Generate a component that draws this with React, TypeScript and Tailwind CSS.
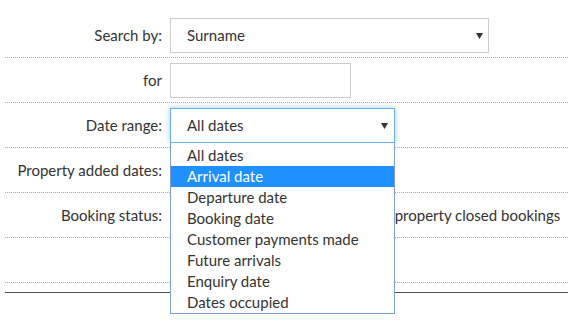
import React from "react";

const DATE_OPTIONS = [
  "All dates",
  "Arrival date",
  "Departure date",
  "Booking date",
  "Customer payments made",
  "Future arrivals",
  "Enquiry date",
  "Dates occupied",
];

function Caret() {
  return (
    <svg width="7" height="6" viewBox="0 0 7 6" className="shrink-0">
      <path d="M0 0h7L3.5 6z" fill="#333" />
    </svg>
  );
}

function Row({ label, children }: { label: string; children?: React.ReactNode }) {
  return (
    <div className="flex items-center border-b border-dotted border-[#aaa] pt-[5px] pb-[4px]">
      <div className="w-[165px] shrink-0 pr-[8px] text-right text-[#333]">{label}</div>
      <div className="relative flex h-[35px] flex-1 items-center">{children}</div>
    </div>
  );
}

export default function App() {
  return (
    <div
      className="h-[326px] w-[573px] bg-white px-[5px] pt-[13px] text-[15px] text-[#333]"
      style={{ fontFamily: "Lato, 'Open Sans', sans-serif" }}
    >
      <Row label="Search by:">
        <div className="flex h-[35px] w-[319px] items-center justify-between border border-[#ccc] pl-[16px] pr-[5px]">
          <span>Surname</span>
          <Caret />
        </div>
      </Row>

      <Row label="for">
        <div className="h-[35px] w-[181px] border border-[#ccc]" />
      </Row>

      <Row label="Date range:">
        <div className="relative">
          <div className="flex h-[35px] w-[225px] items-center justify-between border border-[#66afe9] pl-[16px] pr-[6px] shadow-[0_0_6px_rgba(102,175,233,0.6)]">
            <span>All dates</span>
            <Caret />
          </div>
          {/* open option list */}
          <ul className="absolute left-0 top-full z-10 w-[225px] border-x border-b border-[#7f9fd9] bg-white pt-[2px]">
            {DATE_OPTIONS.map((opt, i) => (
              <li
                key={opt}
                className={`h-[21px] pl-[16px] leading-[21px] ${i === 1 ? "bg-[#1e90ff] text-white" : "text-[#333]"}`}
              >
                {opt}
              </li>
            ))}
          </ul>
        </div>
      </Row>

      <Row label="Property added dates:">
        <div className="h-[35px] w-[200px] border border-[#ccc]" />
      </Row>

      <Row label="Booking status:">
        <div className="flex items-center">
          <input type="checkbox" className="mr-[6px] h-[14px] w-[14px]" />
          <span className="pl-[153px]">Include property closed bookings</span>
        </div>
      </Row>

      <Row label="" />

      <div className="mt-[9px] border-t border-[#555]" />
    </div>
  );
}
